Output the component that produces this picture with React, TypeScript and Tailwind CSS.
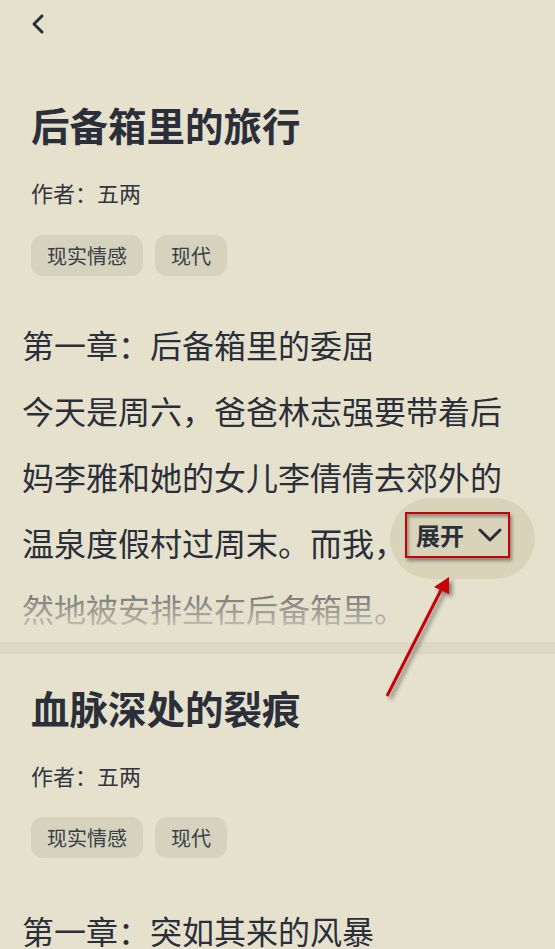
import { ChevronLeft } from 'lucide-react';

const FONT = "font-['Noto_Sans_CJK_SC','Noto_Sans',sans-serif]";

function Tags() {
  return (
    <div className="flex gap-3">
      <span className="flex h-[41px] items-center rounded-xl bg-[#d5d2be] px-4 text-[20px] leading-7 text-[#3a3e46]">
        现实情感
      </span>
      <span className="flex h-[41px] items-center rounded-xl bg-[#d5d2be] px-4 text-[20px] leading-7 text-[#3a3e46]">
        现代
      </span>
    </div>
  );
}

export default function App() {
  return (
    <div className={`relative h-[949px] w-[555px] overflow-hidden bg-[#e6e1cd] text-[#2a2f3a] ${FONT}`}>
      <div className="flex h-12 items-center pl-[22px]">
        <ChevronLeft size={32} strokeWidth={2.3} className="text-[#2a2f3a]" />
      </div>

      {/* book 1 */}
      <section>
        <div className="pl-[31px]">
          <h1 className="mt-[50px] text-[38.5px] font-bold leading-[52px]">后备箱里的旅行</h1>
          <p className="mt-[27px] text-[22px] leading-[30px] text-[#30353f]">作者：五两</p>
          <div className="mt-[28px]">
            <Tags />
          </div>
        </div>
        <div className="relative mt-[35px] h-[331px] overflow-hidden px-[22px] text-[32px] leading-[66px]">
          <p>第一章：后备箱里的委屈</p>
          <p>今天是周六，爸爸林志强要带着后妈李雅和她的女儿李倩倩去郊外的温泉度假村过周末。而我，理所当然地被安排坐在后备箱里。</p>
          <div className="pointer-events-none absolute inset-x-0 bottom-0 h-[80px] bg-gradient-to-b from-[#e6e1cd]/0 to-[#e6e1cd]" />
          <div className="absolute left-[390px] top-[187px] h-[81px] w-[145px] rounded-full bg-[#d8d3b9]" />
        </div>
      </section>

      <div className="h-3 bg-[#ddd8c4]" />

      {/* book 2 */}
      <section>
        <div className="pl-[31px]">
          <h1 className="mt-[27px] text-[38.5px] font-bold leading-[52px]">血脉深处的裂痕</h1>
          <p className="mt-[27px] text-[22px] leading-[30px] text-[#30353f]">作者：五两</p>
          <div className="mt-[27px]">
            <Tags />
          </div>
        </div>
        <div className="mt-[39px] px-[22px] text-[32px] leading-[66px]">
          <p>第一章：突如其来的风暴</p>
        </div>
      </section>

      {/* annotation: expand button highlight */}
      <div className="absolute left-[405px] top-[512px] flex h-[46px] w-[105px] items-center border-2 border-[#c8000a] pl-[9px] shadow-[2px_3px_3px_rgba(0,0,0,0.35),inset_2px_3px_3px_rgba(0,0,0,0.3)]">
        <span className="text-[24px] font-bold leading-none text-[#2a2f3a]">展开</span>
        <svg width="24" height="16" viewBox="0 0 24 16" className="ml-[14px]">
          <polyline points="2,3 12,13 22,3" fill="none" stroke="#2a2f3a" strokeWidth="3" strokeLinecap="round" strokeLinejoin="round" />
        </svg>
      </div>
      <svg
        className="absolute left-0 top-0 drop-shadow-[3px_3px_2px_rgba(0,0,0,0.45)]"
        width="555"
        height="949"
        viewBox="0 0 555 949"
      >
        <line x1="387" y1="696" x2="441" y2="590" stroke="#c8000a" strokeWidth="3" />
        <polygon points="449,577 434,587 449,594" fill="#c8000a" />
      </svg>
    </div>
  );
}
